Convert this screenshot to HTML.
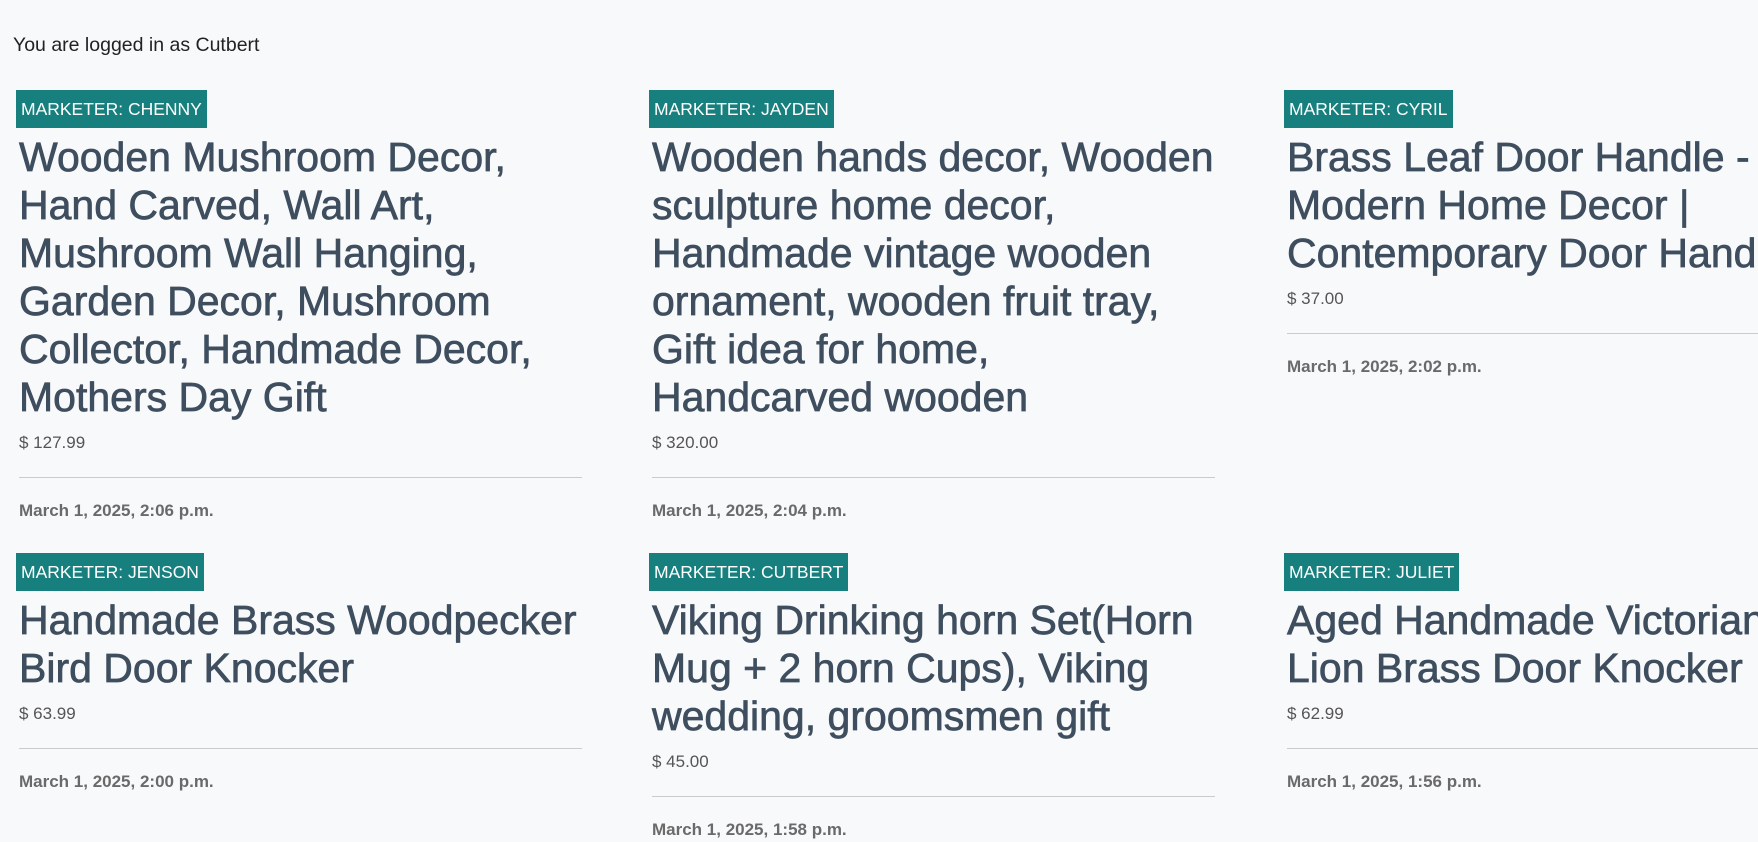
<!DOCTYPE html>
<html><head><meta charset="utf-8">
<style>
html,body{margin:0;padding:0;background:#f8f9fb;width:1758px;height:763px;overflow:hidden;font-family:"Liberation Sans",sans-serif;}
.login{position:absolute;left:13px;top:33px;font-size:19.5px;color:#222;line-height:24px;}
.card{position:absolute;width:565px;}
.badge{display:inline-block;height:38px;line-height:38px;padding:0 5px;background:#17807e;color:#fff;font-size:17.5px;}
.t{margin:5px 0 0 3px;font-size:41px;line-height:48px;color:#3e4e5e;white-space:nowrap;-webkit-text-stroke:0.7px #3e4e5e;}
.p{margin:10px 0 0 3px;font-size:17px;line-height:24px;color:#555;}
.hr{margin:22px 0 0 3px;height:1px;background:#c9cbce;width:563px;}
.d{margin:21px 0 0 3px;font-size:17px;line-height:24px;color:#6a6a6a;font-weight:bold;}
</style></head><body>
<div class="login">You are logged in as Cutbert</div>

<div class="card" style="left:16px;top:90px">
<div class="badge">MARKETER: CHENNY</div>
<div class="t">Wooden Mushroom Decor,<br>Hand Carved, Wall Art,<br>Mushroom Wall Hanging,<br>Garden Decor, Mushroom<br>Collector, Handmade Decor,<br>Mothers Day Gift</div>
<div class="p">$ 127.99</div><div class="hr"></div>
<div class="d">March 1, 2025, 2:06 p.m.</div>
</div>

<div class="card" style="left:649px;top:90px">
<div class="badge">MARKETER: JAYDEN</div>
<div class="t">Wooden hands decor, Wooden<br>sculpture home decor,<br>Handmade vintage wooden<br>ornament, wooden fruit tray,<br>Gift idea for home,<br>Handcarved wooden</div>
<div class="p">$ 320.00</div><div class="hr"></div>
<div class="d">March 1, 2025, 2:04 p.m.</div>
</div>

<div class="card" style="left:1284px;top:90px">
<div class="badge">MARKETER: CYRIL</div>
<div class="t">Brass Leaf Door Handle -<br>Modern Home Decor |<br>Contemporary Door Handle</div>
<div class="p">$ 37.00</div><div class="hr"></div>
<div class="d">March 1, 2025, 2:02 p.m.</div>
</div>

<div class="card" style="left:16px;top:553px">
<div class="badge">MARKETER: JENSON</div>
<div class="t">Handmade Brass Woodpecker<br>Bird Door Knocker</div>
<div class="p">$ 63.99</div><div class="hr"></div>
<div class="d">March 1, 2025, 2:00 p.m.</div>
</div>

<div class="card" style="left:649px;top:553px">
<div class="badge">MARKETER: CUTBERT</div>
<div class="t">Viking Drinking horn Set(Horn<br>Mug + 2 horn Cups), Viking<br>wedding, groomsmen gift</div>
<div class="p">$ 45.00</div><div class="hr"></div>
<div class="d">March 1, 2025, 1:58 p.m.</div>
</div>

<div class="card" style="left:1284px;top:553px">
<div class="badge">MARKETER: JULIET</div>
<div class="t">Aged Handmade Victorian<br>Lion Brass Door Knocker</div>
<div class="p">$ 62.99</div><div class="hr"></div>
<div class="d">March 1, 2025, 1:56 p.m.</div>
</div>
</body></html>
